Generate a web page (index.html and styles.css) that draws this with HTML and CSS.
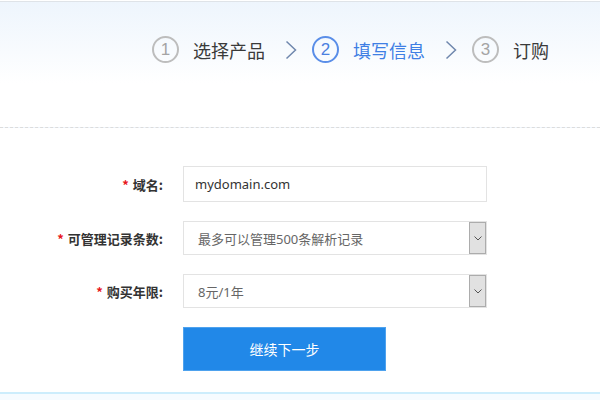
FILE: index.html
```html
<!DOCTYPE html>
<html lang="zh-CN">
<head>
    <meta charset="UTF-8">
    <meta name="viewport" content="width=device-width, initial-scale=1.0">
    <title>域名解析 - 填写信息</title>
    <link rel="stylesheet" href="styles.css">
</head>
<body>
    <div class="steps-bar">
        <div class="steps">
            <div class="step">
                <span class="step-num">1</span>
                <span class="step-name">选择产品</span>
            </div>
            <svg class="step-arrow" width="12" height="20" viewBox="0 0 12 20"><polyline points="1.5,1.5 10.5,10 1.5,18.5" fill="none" stroke="#6f87ad" stroke-width="1.5"/></svg>
            <div class="step active">
                <span class="step-num">2</span>
                <span class="step-name">填写信息</span>
            </div>
            <svg class="step-arrow" width="12" height="20" viewBox="0 0 12 20"><polyline points="1.5,1.5 10.5,10 1.5,18.5" fill="none" stroke="#6f87ad" stroke-width="1.5"/></svg>
            <div class="step">
                <span class="step-num">3</span>
                <span class="step-name">订购</span>
            </div>
        </div>
    </div>

    <div class="order-form">
        <div class="form-row">
            <label class="form-label"><span class="req">*</span>域名:</label>
            <div class="field">mydomain.com</div>
        </div>
        <div class="form-row">
            <label class="form-label"><span class="req">*</span>可管理记录条数:</label>
            <div class="field select">
                <span class="select-value">最多可以管理500条解析记录</span>
                <span class="select-btn"><svg width="8" height="5" viewBox="0 0 8 5"><polyline points="0.5,0.5 4,4 7.5,0.5" fill="none" stroke="#555" stroke-width="1"/></svg></span>
            </div>
        </div>
        <div class="form-row">
            <label class="form-label"><span class="req">*</span>购买年限:</label>
            <div class="field select">
                <span class="select-value">8元/1年</span>
                <span class="select-btn"><svg width="8" height="5" viewBox="0 0 8 5"><polyline points="0.5,0.5 4,4 7.5,0.5" fill="none" stroke="#555" stroke-width="1"/></svg></span>
            </div>
        </div>
        <div class="form-row">
            <span class="form-label"></span>
            <button class="next-btn">继续下一步</button>
        </div>
    </div>

    <div class="page-foot"></div>
</body>
</html>
```

FILE: styles.css
```css
body {
    margin: 0;
    font-family: "Noto Sans", "Noto Sans CJK SC", sans-serif;
    color: #333;
    background-color: #fff;
}

.steps-bar {
    margin-top: 1px;
    height: 125px;
    border-top: 1px solid #dfe3e8;
    border-bottom: 1px dashed #dcdcdc;
    background: linear-gradient(to bottom, #eef5fd 0%, #f8fbfe 40%, #fff 65%);
}

.steps {
    display: flex;
    align-items: center;
    padding: 34px 0 0 152px;
}

.step {
    display: flex;
    align-items: center;
    gap: 14px;
}

.step-num {
    width: 23px;
    height: 23px;
    border: 2px solid #bdbdbd;
    border-radius: 50%;
    display: flex;
    align-items: center;
    justify-content: center;
    font-size: 17px;
    color: #a4a4a4;
    font-family: "Liberation Sans", sans-serif;
}

.step-name {
    font-size: 18px;
    color: #3a3a3a;
    font-family: "Noto Sans CJK SC", sans-serif;
}

.step.active .step-num {
    border-color: #5a8ee8;
    color: #4a80e0;
}

.step.active .step-name {
    color: #3f7fe4;
}

.step-arrow {
    margin: 0 15px 0 20px;
}

.order-form {
    display: flex;
    flex-direction: column;
    gap: 19px;
    padding: 38px 0 20px;
    height: 206px;
}

.form-row {
    display: flex;
    align-items: center;
    gap: 20px;
}

.form-label {
    width: 163px;
    text-align: right;
    font-size: 13px;
    font-weight: bold;
    color: #333;
    font-family: "Noto Sans CJK SC", sans-serif;
}

.req {
    color: #e8181c;
    margin-right: 4px;
}

.field {
    box-sizing: border-box;
    width: 304px;
    height: 36px;
    border: 1px solid #e3e3e3;
    padding: 0 11px;
    display: flex;
    align-items: center;
    font-size: 13px;
    color: #333;
}

.field.select {
    height: 34px;
    padding: 0 0 0 14px;
    justify-content: space-between;
    color: #666;
}

.select-btn {
    box-sizing: border-box;
    width: 17px;
    height: 32px;
    background-color: #e1e1e1;
    border: 1px solid #acacac;
    display: flex;
    align-items: center;
    justify-content: center;
}

.next-btn {
    width: 203px;
    height: 44px;
    border: 1px solid #4ea2ee;
    background-color: #2188e8;
    color: #fff;
    font-size: 14px;
    font-family: "Noto Sans CJK SC", sans-serif;
    cursor: pointer;
}

.page-foot {
    border-top: 2px solid #cdedfc;
    height: 8px;
    background-color: #f6fbff;
}
```
